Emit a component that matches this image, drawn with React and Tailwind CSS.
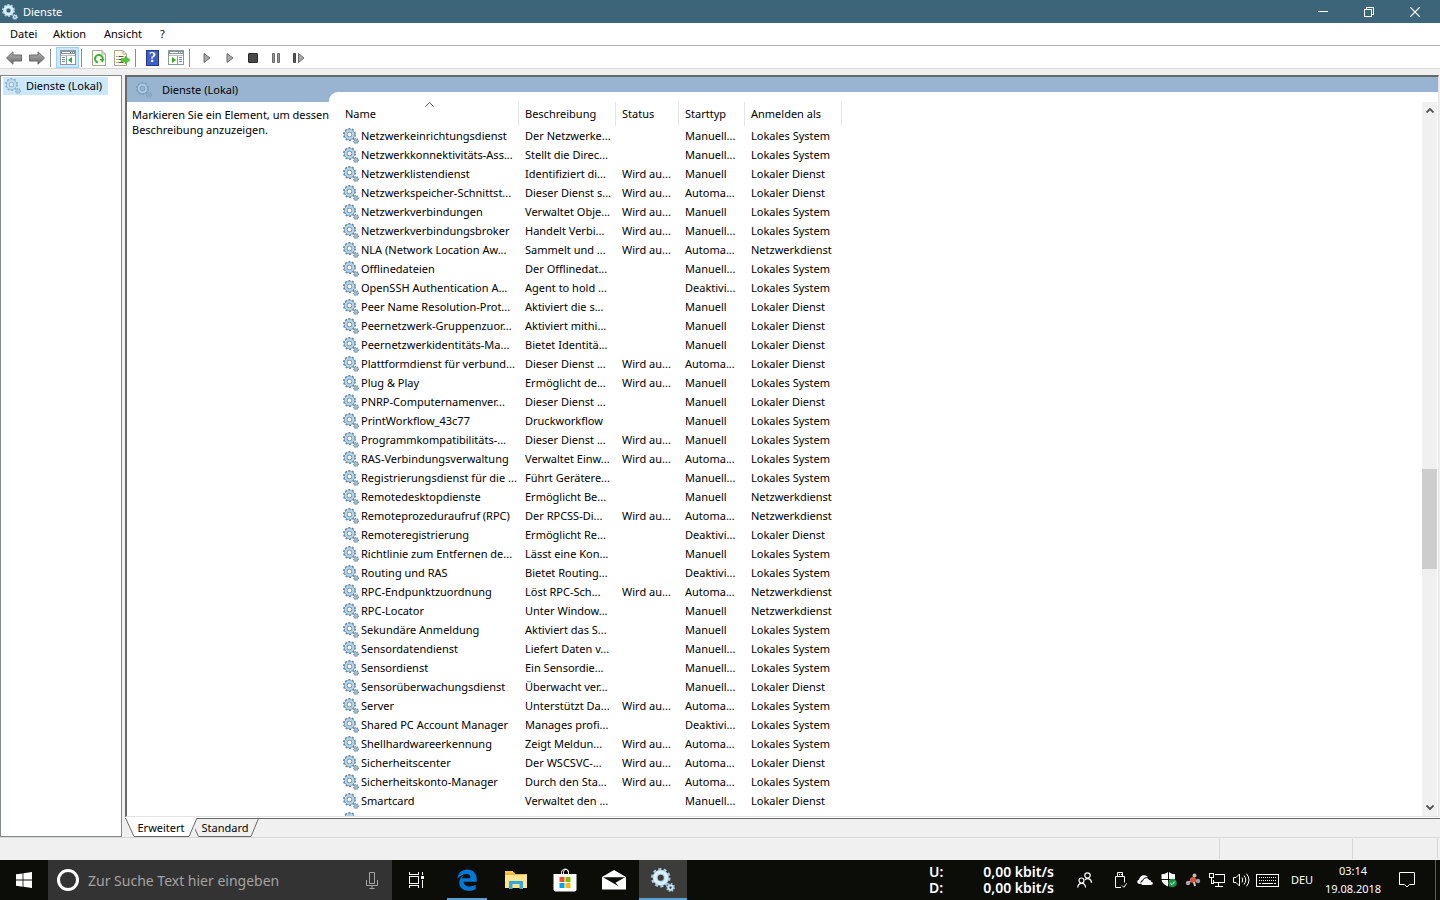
const services = [
  ['Netzwerkeinrichtungsdienst', 'Der Netzwerke...', '', 'Manuell...', 'Lokales System'],
  ['Netzwerkkonnektivitäts-Ass...', 'Stellt die Direc...', '', 'Manuell...', 'Lokales System'],
  ['Netzwerklistendienst', 'Identifiziert di...', 'Wird au...', 'Manuell', 'Lokaler Dienst'],
  ['Netzwerkspeicher-Schnittst...', 'Dieser Dienst s...', 'Wird au...', 'Automa...', 'Lokaler Dienst'],
  ['Netzwerkverbindungen', 'Verwaltet Obje...', 'Wird au...', 'Manuell', 'Lokales System'],
  ['Netzwerkverbindungsbroker', 'Handelt Verbi...', 'Wird au...', 'Manuell...', 'Lokales System'],
  ['NLA (Network Location Aw...', 'Sammelt und ...', 'Wird au...', 'Automa...', 'Netzwerkdienst'],
  ['Offlinedateien', 'Der Offlinedat...', '', 'Manuell...', 'Lokales System'],
  ['OpenSSH Authentication A...', 'Agent to hold ...', '', 'Deaktivi...', 'Lokales System'],
  ['Peer Name Resolution-Prot...', 'Aktiviert die s...', '', 'Manuell', 'Lokaler Dienst'],
  ['Peernetzwerk-Gruppenzuor...', 'Aktiviert mithi...', '', 'Manuell', 'Lokaler Dienst'],
  ['Peernetzwerkidentitäts-Ma...', 'Bietet Identitä...', '', 'Manuell', 'Lokaler Dienst'],
  ['Plattformdienst für verbund...', 'Dieser Dienst ...', 'Wird au...', 'Automa...', 'Lokaler Dienst'],
  ['Plug & Play', 'Ermöglicht de...', 'Wird au...', 'Manuell', 'Lokales System'],
  ['PNRP-Computernamenver...', 'Dieser Dienst ...', '', 'Manuell', 'Lokaler Dienst'],
  ['PrintWorkflow_43c77', 'Druckworkflow', '', 'Manuell', 'Lokales System'],
  ['Programmkompatibilitäts-...', 'Dieser Dienst ...', 'Wird au...', 'Manuell', 'Lokales System'],
  ['RAS-Verbindungsverwaltung', 'Verwaltet Einw...', 'Wird au...', 'Automa...', 'Lokales System'],
  ['Registrierungsdienst für die ...', 'Führt Gerätere...', '', 'Manuell...', 'Lokales System'],
  ['Remotedesktopdienste', 'Ermöglicht Be...', '', 'Manuell', 'Netzwerkdienst'],
  ['Remoteprozeduraufruf (RPC)', 'Der RPCSS-Di...', 'Wird au...', 'Automa...', 'Netzwerkdienst'],
  ['Remoteregistrierung', 'Ermöglicht Re...', '', 'Deaktivi...', 'Lokaler Dienst'],
  ['Richtlinie zum Entfernen de...', 'Lässt eine Kon...', '', 'Manuell', 'Lokales System'],
  ['Routing und RAS', 'Bietet Routing...', '', 'Deaktivi...', 'Lokales System'],
  ['RPC-Endpunktzuordnung', 'Löst RPC-Sch...', 'Wird au...', 'Automa...', 'Netzwerkdienst'],
  ['RPC-Locator', 'Unter Window...', '', 'Manuell', 'Netzwerkdienst'],
  ['Sekundäre Anmeldung', 'Aktiviert das S...', '', 'Manuell', 'Lokales System'],
  ['Sensordatendienst', 'Liefert Daten v...', '', 'Manuell...', 'Lokales System'],
  ['Sensordienst', 'Ein Sensordie...', '', 'Manuell...', 'Lokales System'],
  ['Sensorüberwachungsdienst', 'Überwacht ver...', '', 'Manuell...', 'Lokaler Dienst'],
  ['Server', 'Unterstützt Da...', 'Wird au...', 'Automa...', 'Lokales System'],
  ['Shared PC Account Manager', 'Manages profi...', '', 'Deaktivi...', 'Lokales System'],
  ['Shellhardwareerkennung', 'Zeigt Meldun...', 'Wird au...', 'Automa...', 'Lokales System'],
  ['Sicherheitscenter', 'Der WSCSVC-...', 'Wird au...', 'Automa...', 'Lokaler Dienst'],
  ['Sicherheitskonto-Manager', 'Durch den Sta...', 'Wird au...', 'Automa...', 'Lokales System'],
  ['Smartcard', 'Verwaltet den ...', '', 'Manuell...', 'Lokaler Dienst'],
  ['Smartcard-Geräteaufzählun...', 'Erstellt Softw...', '', 'Manuell...', 'Lokales System'],
];

function GearIcon({ className = 'size-4', faded = false, light = false }) {
  const edge = light ? '#a9cbe2' : '#6888a2';
  const body = light ? '#dcf0fb' : '#b4d6ec';
  return (
    <svg className={className} viewBox="0 0 16 16" fill="none" opacity={faded ? 0.6 : 1} aria-hidden="true">
      <circle cx="6.5" cy="6.5" r="5.4" stroke={edge} strokeWidth="2.2" strokeDasharray="1.9 1.49" />
      <circle cx="6.5" cy="6.5" r="3.7" stroke={edge} strokeWidth="3.4" />
      <circle cx="6.5" cy="6.5" r="3.8" stroke={body} strokeWidth="2.2" />
      <circle cx="13" cy="13" r="2.4" stroke={edge} strokeWidth="1.2" strokeDasharray="0.94 0.94" />
      <circle cx="13" cy="13" r="1.5" stroke={edge} strokeWidth="1.5" />
      <circle cx="13" cy="13" r="1.5" stroke={body} strokeWidth="0.6" />
    </svg>
  );
}

function ArrowIcon({ flip }) {
  return (
    <svg className={flip ? 'h-4 w-[18px] -scale-x-100' : 'h-4 w-[18px]'} viewBox="0 0 18 16" aria-hidden="true">
      <defs>
        <linearGradient id="arrowFill" x1="0" y1="0" x2="0" y2="1">
          <stop offset="0" stopColor="#b5b5b5" />
          <stop offset="1" stopColor="#6a6a6a" />
        </linearGradient>
      </defs>
      <path d="M1.500 8 8 1.800V5h8.500v6H8v3.200z" fill="url(#arrowFill)" stroke="#6a6a6a" />
    </svg>
  );
}

function ConsoleIcon({ right }) {
  return (
    <svg className="h-[15px] w-4" viewBox="0 0 16 15" fill="none" shapeRendering="crispEdges" aria-hidden="true">
      <path d="M.5.500h15v13.500H.5z" fill="#fff" stroke="#8d979f" />
      <path d="M1 1h14v3H1z" fill="#8a949c" />
      <path d="M2 2h8v1H2zM11 2h1v1h-1zM13 2h1v1h-1z" fill="#fff" />
      <path d="M1 5h14v1H1z" fill="#b9c0c5" />
      {right ? (
        <>
          <path d="M9 6h1v8H9z" fill="#8d979f" />
          <path d="M11 7h3v1h-3zM11 9h3v1h-3zM11 11h3v1h-3z" fill="#6c8fb5" />
          <path d="m4 7 4 3-4 3z" fill="#2faa1f" shapeRendering="auto" />
        </>
      ) : (
        <>
          <path d="M6 6h1v8H6z" fill="#8d979f" />
          <path d="M2 7h3v1H2zM2 9h3v1H2zM2 11h3v1H2z" fill="#6c8fb5" />
          <path d="M12 7v6l-4-3z" fill="#2faa1f" shapeRendering="auto" />
        </>
      )}
    </svg>
  );
}

function RefreshIcon() {
  return (
    <svg className="h-4 w-3.5" viewBox="0 0 14 16" fill="none" aria-hidden="true">
      <path d="M.5.500h9.500l3.500 3.500v11.500H.5z" fill="#fdfdf6" stroke="#a7a797" />
      <path d="M10 .5V4h3.500" stroke="#a7a797" />
      <path d="M6 12.400A3.800 3.800 0 1 1 10.600 9.500" stroke="#35b02c" strokeWidth="2" />
      <path d="M7.500 9h5.200l-2.400 3.600z" fill="#35b02c" />
    </svg>
  );
}

function ExportIcon() {
  return (
    <svg className="size-4" viewBox="0 0 16 16" fill="none" aria-hidden="true">
      <path d="M.5.500h8.500L12.500 4v11.500H.5z" fill="#fffbe0" stroke="#a7a797" />
      <path d="M9 .5V4h3.500" stroke="#a7a797" />
      <path d="M2.500 6.500h1M2.500 9.500h1M2.500 12.500h1M4.500 6.500h5M4.500 9.500h3M4.500 12.500h5" stroke="#555" />
      <path d="M7 8.500h4V6l5 4-5 4v-2.500H7z" fill="#4fc83c" stroke="#2f9c24" strokeWidth="0.5" />
    </svg>
  );
}

function HelpIcon() {
  return (
    <span className="flex h-4 w-[13px] items-center justify-center border border-[#22378c] bg-[#3c5fc8] font-['Liberation_Serif',serif] text-sm font-bold text-white">
      ?
    </span>
  );
}

function PlayIcon() {
  return (
    <svg className="h-2.5 w-2" viewBox="0 0 8 10" aria-hidden="true">
      <path d="M1 .5v9L7 5z" fill="#aaa" stroke="#6b6b6b" />
    </svg>
  );
}

function StopIcon() {
  return <span className="size-2.5 rounded-[1px] border border-[#2c2c2c] bg-[#484848]" />;
}

function PauseIcon() {
  return (
    <svg className="h-2.5 w-2" viewBox="0 0 8 10" aria-hidden="true">
      <path d="M.5.500h2v9h-2zM5.500.500h2v9h-2z" fill="#999" stroke="#6b6b6b" />
    </svg>
  );
}

function RestartIcon() {
  return (
    <svg className="h-2.5 w-3" viewBox="0 0 12 10" aria-hidden="true">
      <path d="M.5.500h2v9h-2z" fill="#555" stroke="#444" />
      <path d="M5.500.500v9l5.500-4.500z" fill="#aaa" stroke="#6b6b6b" />
    </svg>
  );
}

function ToolButton({ label, active, children }) {
  return (
    <button
      type="button"
      aria-label={label}
      className={
        active
          ? 'flex h-[21px] w-[23px] items-center justify-center border border-[#99d1ff] bg-[#cce8ff]'
          : 'flex h-[21px] w-[23px] items-center justify-center'
      }
    >
      {children}
    </button>
  );
}

function ToolSeparator() {
  return <div className="mr-[5px] ml-0.5 h-[18px] w-px bg-[#8d8d8d]" />;
}

function TitleBar() {
  return (
    <header className="flex h-[23px] items-center bg-[#3d6579] pr-0.5 pl-0.5 text-white">
      <GearIcon light />
      <h1 className="ml-[5px] flex-1 pt-0.5">Dienste</h1>
      <button type="button" aria-label="Minimieren" className="flex h-5 w-[46px] items-center justify-center">
        <span className="h-px w-2.5 bg-white" />
      </button>
      <button type="button" aria-label="Verkleinern" className="flex h-5 w-[46px] items-center justify-center">
        <svg className="size-2.5" viewBox="0 0 10 10" fill="none" stroke="#fff" shapeRendering="crispEdges">
          <path d="M.5 2.500h7v7h-7zM2.500 2.500v-2h7v7h-2" />
        </svg>
      </button>
      <button type="button" aria-label="Schließen" className="flex h-5 w-[46px] items-center justify-center">
        <svg className="size-2.5" viewBox="0 0 10 10" stroke="#fff" strokeWidth="1.2">
          <path d="m0 0 10 10M10 0 0 10" />
        </svg>
      </button>
    </header>
  );
}

function MenuBar() {
  return (
    <nav className="flex h-[23px] items-center border-b border-[#b0b0b8] bg-white pl-[5px]">
      <button type="button" className="w-[43px] pl-[5px] text-left">Datei</button>
      <button type="button" className="w-[51px] pl-[5px] text-left">Aktion</button>
      <button type="button" className="w-14 pl-[5px] text-left">Ansicht</button>
      <button type="button" className="w-5 pl-[5px] text-left">?</button>
    </nav>
  );
}

function ToolBar() {
  return (
    <div className="flex h-[23px] items-center border-b border-[#d7d7d7] bg-white pt-px pl-0.5">
      <ToolButton label="Zurück"><ArrowIcon /></ToolButton>
      <ToolButton label="Vorwärts"><ArrowIcon flip /></ToolButton>
      <ToolSeparator />
      <ToolButton label="Konsolenstruktur" active><ConsoleIcon /></ToolButton>
      <ToolSeparator />
      <ToolButton label="Aktualisieren"><RefreshIcon /></ToolButton>
      <ToolButton label="Liste exportieren"><ExportIcon /></ToolButton>
      <ToolSeparator />
      <ToolButton label="Hilfe"><HelpIcon /></ToolButton>
      <ToolButton label="Aktionsbereich"><ConsoleIcon right /></ToolButton>
      <ToolSeparator />
      <ToolButton label="Dienst starten"><PlayIcon /></ToolButton>
      <ToolButton label="Dienst fortsetzen"><PlayIcon /></ToolButton>
      <ToolButton label="Dienst beenden"><StopIcon /></ToolButton>
      <ToolButton label="Dienst anhalten"><PauseIcon /></ToolButton>
      <ToolButton label="Dienst neu starten"><RestartIcon /></ToolButton>
    </div>
  );
}

function ServiceTable() {
  const head = 'h-6 border-r border-[#e5e5e5] px-1.5 text-left font-normal';
  const cell = 'p-0 pt-0.5 pl-1.5';
  return (
    <table className="w-[503px] table-fixed border-separate border-spacing-0 whitespace-nowrap">
      <colgroup>
        <col className="w-[180px]" />
        <col className="w-[97px]" />
        <col className="w-[63px]" />
        <col className="w-[66px]" />
        <col className="w-[97px]" />
      </colgroup>
      <thead>
        <tr>
          <th className={`relative ${head}`}>
            Name
            <svg className="absolute top-0 left-[86px] h-[5px] w-[9px]" viewBox="0 0 9 5" fill="none" stroke="#555">
              <path d="M.5 4.500l4-4 4 4" />
            </svg>
          </th>
          <th className={head}>Beschreibung</th>
          <th className={head}>Status</th>
          <th className={head}>Starttyp</th>
          <th className={head}>Anmelden als</th>
        </tr>
      </thead>
      <tbody>
        {services.map(([name, description, status, startType, account]) => (
          <tr key={name} className="h-[19px]">
            <td className="p-0 pl-1">
              <div className="flex h-[19px] items-center gap-0.5">
                <GearIcon className="size-4 shrink-0" />
                <span className="pt-0.5">{name}</span>
              </div>
            </td>
            <td className={cell}>{description}</td>
            <td className={cell}>{status}</td>
            <td className={cell}>{startType}</td>
            <td className={cell}>{account}</td>
          </tr>
        ))}
      </tbody>
    </table>
  );
}

function ScrollBar() {
  return (
    <div className="mt-[10px] mr-px flex w-[15px] flex-col bg-[#f0f0f0]">
      <button type="button" aria-label="Nach oben" className="flex h-[17px] items-center justify-center">
        <svg className="h-[5px] w-2" viewBox="0 0 8 5" fill="none" stroke="#505050" strokeWidth="1.8">
          <path d="m.5 4.500 3.500-3.500 3.500 3.500" />
        </svg>
      </button>
      <div className="flex-[350]" />
      <div className="h-[100px] bg-[#cdcdcd]" />
      <div className="flex-[230]" />
      <button type="button" aria-label="Nach unten" className="flex h-[17px] items-center justify-center">
        <svg className="h-[5px] w-2" viewBox="0 0 8 5" fill="none" stroke="#505050" strokeWidth="1.8">
          <path d="m.5.500 3.500 3.500 3.500-3.500" />
        </svg>
      </button>
    </div>
  );
}

function ViewTabs() {
  return (
    <div className="flex h-[19px]">
      <button type="button" className="relative h-[19px] w-[70px] pt-0.5 pl-0.5">
        <svg className="absolute top-0 left-0 h-[19px] w-[72px]" viewBox="0 0 72 19" fill="none">
          <path d="M0 0 9 18.500h55L72 0z" fill="#fff" />
          <path d="M.5 0 9 18.500h55L72 0" stroke="#696969" />
        </svg>
        <span className="relative">Erweitert</span>
      </button>
      <button type="button" className="relative h-[19px] w-16 pt-0.5 pr-1">
        <svg className="absolute top-0 left-0 h-[19px] w-16" viewBox="0 0 64 19" fill="none">
          <path d="M2 .5h62M-.5 10 3.500 18.500H56L63.500.500" stroke="#696969" />
        </svg>
        <span className="relative">Standard</span>
      </button>
      <div className="flex-1 border-t border-[#696969]" />
    </div>
  );
}

function Workspace() {
  return (
    <main className="flex min-h-0 flex-1 gap-[3px] pt-1.5">
      <aside className="w-[122px] border border-[#828790] bg-white p-px">
        <a
          href="#dienste"
          className="ml-px flex h-[18px] w-[105px] items-center gap-[5px] bg-[#cce8ff] pl-0.5 whitespace-nowrap"
        >
          <GearIcon faded />
          Dienste (Lokal)
        </a>
      </aside>
      <div className="flex min-w-0 flex-1 flex-col">
        <div className="mr-px flex min-h-0 flex-1 border-t-2 border-r border-b border-l-2 border-t-[#696969] border-r-[#e3e3e3] border-b-[#e3e3e3] border-l-[#696969] bg-[#99b4d1]">
          <section className="relative z-10 flex w-[202px] flex-col">
            <h2 className="flex h-[25px] items-center gap-2.5 pt-px pl-[9px]">
              <GearIcon faded />
              Dienste (Lokal)
            </h2>
            <p className="flex-1 bg-white pt-[5px] pl-[5px] leading-[15px] whitespace-nowrap">
              Markieren Sie ein Element, um dessen
              <br />
              Beschreibung anzuzeigen.
            </p>
          </section>
          <section className="mt-[15px] flex min-w-0 flex-1 rounded-tl-[9px] bg-white">
            <div className="min-w-0 flex-1 overflow-hidden pt-[10px] pl-[10px]">
              <ServiceTable />
            </div>
            <ScrollBar />
          </section>
        </div>
        <div className="h-px bg-white" />
        <ViewTabs />
      </div>
    </main>
  );
}

function StatusBar() {
  return (
    <footer className="flex h-[23px] justify-end border-t border-[#d7d7d7] pt-px pr-0.5 pb-px">
      <div className="w-[133px] border-l border-[#d7d7d7]" />
      <div className="w-[86px] border-x border-[#d7d7d7]" />
    </footer>
  );
}

function StartIcon() {
  return (
    <svg className="size-4" viewBox="0 0 16 16" fill="#fff" aria-hidden="true">
      <path d="M0 2.300 6.600 1.400V7.600H0zM7.400 1.300 16 0v7.600H7.400zM0 8.400h6.600v6.300L0 13.800zM7.400 8.400H16V16l-8.600-1.200z" />
    </svg>
  );
}

function TaskViewIcon() {
  return (
    <svg className="h-4 w-[17px]" viewBox="0 0 17 16" fill="none" stroke="#fff" shapeRendering="crispEdges" aria-hidden="true">
      <path d="M1.500 4.500h9v7h-9zM1.500 0v2.500h9V0M1.500 16v-2.500h9V16M14.500 0v3M14.500 8v8" />
      <path d="M13 4h3v3h-3z" fill="#fff" stroke="none" />
    </svg>
  );
}

function EdgeIcon() {
  return (
    <svg className="h-[22px] w-5" viewBox="0 0 20 22" fill="#0078d7" aria-hidden="true">
      <path d="M.3 9.700C1 4.200 4.800.500 10.300.500c6 0 9.400 4.200 9.400 9.700v2.600H6.600c.2 3.200 2.700 4.700 5.900 4.700 2.300 0 4.300-.6 6.100-1.700v4.400c-2 1.100-4.500 1.600-7.100 1.600-5.300 0-9.200-3-9.200-8.200 0-3.300 1.700-6 4.800-7.700-1 .8-1.600 2-1.800 3.300h8.200c0-2.600-1.200-4.200-3.900-4.200-3.400 0-6.800 1.800-9.300 4.700z" />
    </svg>
  );
}

function ExplorerIcon() {
  return (
    <svg className="h-[18px] w-[22px]" viewBox="0 0 22 18" aria-hidden="true">
      <path d="M0 1h9l1.500 2H22v14H0z" fill="#e8b93c" />
      <path d="M0 0h8v2H0z" fill="#f7c843" />
      <path d="M0 4h22v13H0z" fill="#ffe58f" />
      <path d="M4 10h14v8h-3.500v-5h-7v5H4z" fill="#35a7e0" />
    </svg>
  );
}

function StoreIcon() {
  return (
    <svg className="h-6 w-6" viewBox="0 0 24 24" fill="none" aria-hidden="true">
      <path d="M8.500 7V4.500c0-4.500 7-4.500 7 0V7M10.500 7V4.500c0-4.500 5-4 5 0" stroke="#fff" />
      <path d="M.5 6h23v15.500a2 2 0 0 1-2 2h-19a2 2 0 0 1-2-2z" fill="#fff" />
      <path d="M6.500 9h5v5h-5z" fill="#f25022" />
      <path d="M12.500 9h5v5h-5z" fill="#7fba00" />
      <path d="M6.500 15h5v5h-5z" fill="#00a4ef" />
      <path d="M12.500 15h5v5h-5z" fill="#ffb900" />
    </svg>
  );
}

function MailIcon() {
  return (
    <svg className="h-5 w-6" viewBox="0 0 24 20" aria-hidden="true">
      <path d="M0 7 12 0l12 7v12.500H0z" fill="#fff" />
      <path d="M1 7.200h22L13.500 12.800l3.500 3.800z" fill="#0c0d09" />
    </svg>
  );
}

function TaskButton({ label, running, active, children }) {
  return (
    <button
      type="button"
      aria-label={label}
      className={active ? 'flex w-12 flex-col items-center bg-[#3c3d3a]' : 'flex w-12 flex-col items-center'}
    >
      <span className="flex h-[38px] items-center pt-0.5">{children}</span>
      {(running || active) && <span className={active ? 'h-0.5 w-full bg-[#5f9fcf]' : 'h-0.5 w-10 bg-[#5f9fcf]'} />}
    </button>
  );
}

function TrayIcon({ label, wide, children }) {
  return (
    <button type="button" aria-label={label} className={wide ? 'flex w-7 justify-center' : 'flex w-6 justify-center'}>
      {children}
    </button>
  );
}

function Tray() {
  return (
    <div className="flex items-center">
      <TrayIcon label="Kontakte">
        <svg className="size-4" viewBox="0 0 16 16" fill="none" stroke="#fff" strokeWidth="1.2">
          <circle cx="10.500" cy="3.500" r="2.700" />
          <circle cx="4.500" cy="8.500" r="2.500" />
          <path d="M8 7.800c2-2.200 6.500-1.300 6.500 3M.8 15.500c0-5.500 7.700-5.500 7.700 0" />
        </svg>
      </TrayIcon>
      <div className="w-3" />
      <TrayIcon label="Hardware sicher entfernen">
        <svg className="h-4 w-3" viewBox="0 0 12 16" fill="none" stroke="#fff">
          <path d="M2.500 4.500v-4h5v4M6 15.500H.5v-11h9v6M4 2.500h1M6 2.500h1M7 13.500l1.800 1.800 3-4" />
        </svg>
      </TrayIcon>
      <TrayIcon label="OneDrive">
        <svg className="h-2.5 w-4" viewBox="0 0 16 10" fill="#fff">
          <path d="M2.500 9C-.5 8.500-.3 5 2 4.700 2.500 2 4.800 0 7.500.3c1.600.1 2.800.9 3.400 2-3-.6-5 .9-5.400 3C3.600 5.700 3 7.500 4 9z" />
          <path d="M6 10c-2.500 0-2.500-3.600 0-3.800C6.300 2.800 11 2 12 5c2-.1 2.300 1 2.200 1.700C16.500 7 16.300 10 14 10z" />
        </svg>
      </TrayIcon>
      <TrayIcon label="Windows Defender">
        <svg className="size-4" viewBox="0 0 16 16">
          <path d="M7 0C5 1.800 3 2.200.5 2.200V7H7zM8 0c2 1.800 3.500 2.200 6 2.200V7H8zM.6 8H7v6.500C3.500 13 1 11 .6 8zM8 8h6c-.3 3-2.500 5-6 6.500z" fill="#fff" />
          <circle cx="11.500" cy="11" r="4.300" fill="#16954b" />
          <path d="m9.400 11 1.600 1.600 2.800-3" stroke="#fff" fill="none" />
        </svg>
      </TrayIcon>
      <TrayIcon label="Netzwerkmonitor">
        <svg className="h-3.5 w-4" viewBox="0 0 16 14">
          <path d="m2.500 10 5-3 2-5M8 7l5 1" stroke="#c9c9c9" strokeWidth="1.500" fill="none" />
          <circle cx="3" cy="10" r="2.200" fill="#a9a9a9" />
          <circle cx="9.500" cy="2.500" r="2" fill="#bcbcbc" />
          <circle cx="13" cy="8" r="2.200" fill="#9c9c9c" />
          <circle cx="8" cy="7" r="3" fill="#e0503f" />
          <path d="m9 9 1 4" stroke="#c9c9c9" strokeWidth="2" />
        </svg>
      </TrayIcon>
      <TrayIcon label="Netzwerk">
        <svg className="h-3.5 w-4" viewBox="0 0 16 14" fill="none" stroke="#fff" shapeRendering="crispEdges">
          <path d="M6 1.500h9.500v8H4.500V7M9.500 10v3M6 13.500h8M.5.500h4v4h-4zM2.500 5v5h2" />
        </svg>
      </TrayIcon>
      <TrayIcon label="Lautsprecher">
        <svg className="h-3.5 w-[17px]" viewBox="0 0 17 14" fill="none" stroke="#fff">
          <path d="M.5 4.500H3l3.500-3.500v12L3 9.500H.5zM9 4.500q1.500 2.500 0 5M11 2.500q3.500 4.500 0 9M13.500.700q5 6.300 0 12.600" />
        </svg>
      </TrayIcon>
      <TrayIcon label="Bildschirmtastatur" wide>
        <svg className="h-[13px] w-[23px]" viewBox="0 0 23 13" fill="none" stroke="#fff" shapeRendering="crispEdges">
          <path d="M.5.500h22v12H.5z" />
          <path d="M3 3.500h17M3 6.500h17" strokeDasharray="1 1" />
          <path d="M3 9.500h2M6 9.500h11M18 9.500h2" />
        </svg>
      </TrayIcon>
      <button type="button" className="w-[42px] text-white">DEU</button>
      <button type="button" className="w-[60px] leading-[18px] text-white">
        03:14
        <br />
        19.08.2018
      </button>
      <button type="button" aria-label="Info-Center" className="flex w-12 justify-center">
        <svg className="size-4" viewBox="0 0 16 16" fill="none" stroke="#fff">
          <path d="M.5.500h15v12h-5L8 15l-2.500-2.500h-5z" />
        </svg>
      </button>
      <button type="button" aria-label="Desktop anzeigen" className="ml-1 h-10 w-[5px] border-l border-[#5c5c5a]" />
    </div>
  );
}

function TaskBar() {
  return (
    <div className="flex h-10 items-stretch bg-[#0c0d09]">
      <button type="button" aria-label="Start" className="flex w-12 items-center justify-center">
        <StartIcon />
      </button>
      <label className="flex w-[344px] items-center bg-[#333333] pr-[14px] pl-[9px]">
        <span className="size-[22px] shrink-0 rounded-full border-[3px] border-white" />
        <input
          type="text"
          aria-label="Suche"
          placeholder="Zur Suche Text hier eingeben"
          className="ml-[9px] min-w-0 flex-1 bg-transparent pt-0.5 text-sm outline-none placeholder:text-[#a3a3a3]"
        />
        <svg className="h-[17px] w-3" viewBox="0 0 12 17" fill="none" stroke="#a3a3a3">
          <path d="M3.500.500h5v11h-5zM.5 8v5.500h11V8M6 13.500v3M3.500 16.500h5" />
        </svg>
      </label>
      <button type="button" aria-label="Aktive Anwendungen" className="mr-[3px] flex w-12 items-center justify-center">
        <TaskViewIcon />
      </button>
      <div className="flex gap-px">
        <TaskButton label="Microsoft Edge" running><EdgeIcon /></TaskButton>
        <TaskButton label="Explorer"><ExplorerIcon /></TaskButton>
        <TaskButton label="Microsoft Store"><StoreIcon /></TaskButton>
        <TaskButton label="Mail"><MailIcon /></TaskButton>
        <TaskButton label="Dienste" active><GearIcon className="size-6" light /></TaskButton>
      </div>
      <div className="flex-1" />
      <div className="mr-[19px] flex w-[125px] items-center justify-between text-sm leading-4 font-semibold text-white">
        <div>U:<br />D:</div>
        <div className="text-right">0,00 kbit/s<br />0,00 kbit/s</div>
      </div>
      <Tray />
    </div>
  );
}

export default function App() {
  return (
    <div className="flex h-screen flex-col overflow-hidden bg-[#f0f0f0] font-['Noto_Sans','Open_Sans',sans-serif] text-[11px] text-black">
      <TitleBar />
      <MenuBar />
      <ToolBar />
      <Workspace />
      <StatusBar />
      <TaskBar />
    </div>
  );
}
